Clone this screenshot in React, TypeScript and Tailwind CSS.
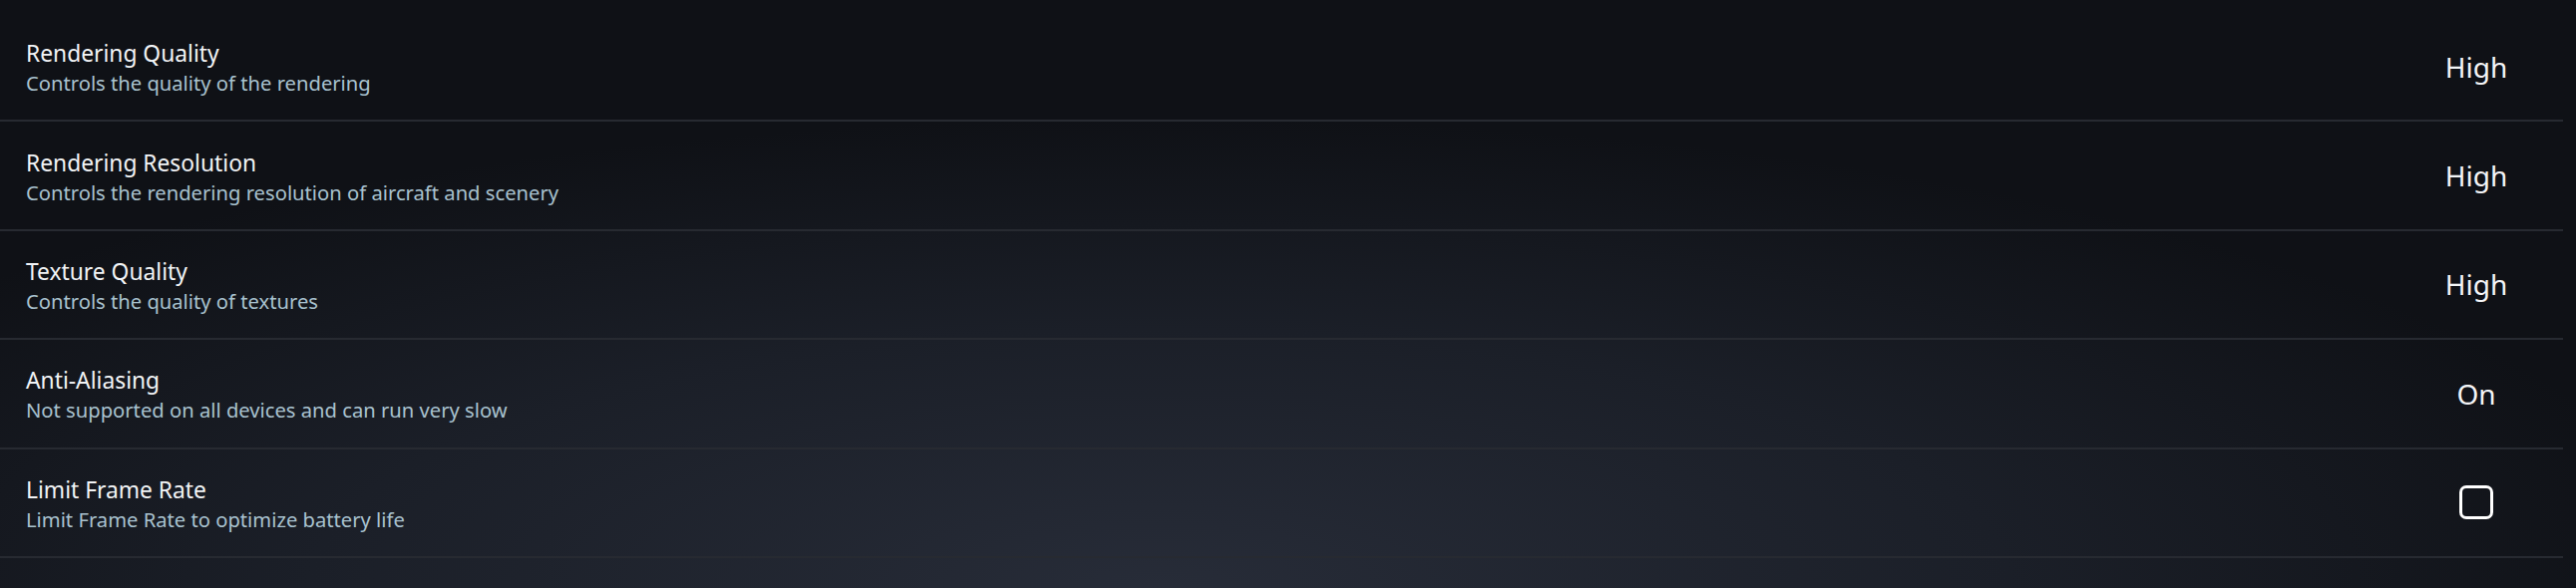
const settings = [
  { title: "Rendering Quality", desc: "Controls the quality of the rendering", value: "High" },
  { title: "Rendering Resolution", desc: "Controls the rendering resolution of aircraft and scenery", value: "High" },
  { title: "Texture Quality", desc: "Controls the quality of textures", value: "High" },
  { title: "Anti-Aliasing", desc: "Not supported on all devices and can run very slow", value: "On" },
  { title: "Limit Frame Rate", desc: "Limit Frame Rate to optimize battery life", value: null },
];

export default function App() {
  return (
    <main
      className="min-h-screen w-full bg-[radial-gradient(ellipse_60%_80%_at_45%_100%,#272c38_0%,#1b1f28_55%,#0f1116_100%)] font-['Noto_Sans','Open_Sans',sans-serif]"
    >
      <div className="pt-[13px] pr-[13px]">
        {settings.map((item) => (
          <div
            key={item.title}
            className="flex h-[109.4px] items-center border-b-2 border-[#272a31]"
          >
            <div className="flex flex-1 flex-col pl-[26px] pt-[4px]">
              <p className="text-[22.8px] leading-[30px] text-[#f2f4f6]">{item.title}</p>
              <p className="text-[20.2px] leading-[29px] text-[#a9c2cf]">{item.desc}</p>
            </div>
            <div className="flex w-[174px] items-center justify-center">
              {item.value ? (
                <span className="text-[28px] leading-none text-[#f4f5f7]">{item.value}</span>
              ) : (
                <span className="block h-[34px] w-[34px] rounded-[7px] border-[3px] border-white" />
              )}
            </div>
          </div>
        ))}
      </div>
    </main>
  );
}
